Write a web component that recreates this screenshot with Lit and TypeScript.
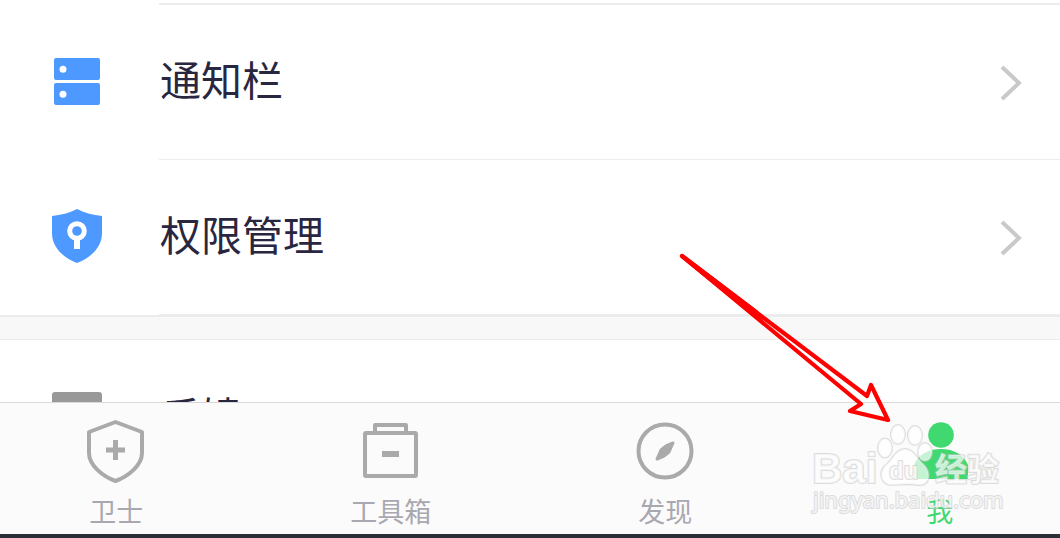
import { LitElement, html, svg, css } from "lit";
import { customElement, property } from "lit/decorators.js";

const icons: Record<string, unknown> = {
  notice: svg`<rect x="2" y="4" width="46" height="22" rx="2" fill="#4d99ff"/><rect x="2" y="29" width="46" height="22" rx="2" fill="#4d99ff"/><circle cx="11" cy="15.300" r="3.500" fill="#fff"/><circle cx="11" cy="40.300" r="3.500" fill="#fff"/>`,
  shield: svg`<path d="M0 7C9 6 17 4 25 0C33 4 41 6 50 7V24C50 39 38 49 25 54C12 49 0 39 0 24Z" fill="#4d99ff"/><circle cx="25" cy="22" r="7.300" fill="none" stroke="#fff" stroke-width="5"/><path d="M25 28V40" stroke="#fff" stroke-width="6"/>`,
  feedback: svg`<rect x="0" y="2" width="50" height="50" rx="3" fill="#999"/>`,
};

@customElement("list-row")
class ListRow extends LitElement {
  @property() label = "";
  @property() icon = "";
  static styles = css`
    :host { display: block; }
    .row { display: flex; width: 100%; height: 155px; box-sizing: border-box; align-items: center; padding: 0 0 0 52px; border: 0; background: #fff; font: inherit; text-align: left; }
    .icon { width: 50px; height: 54px; flex: none; margin: 0 57px 3px 0; }
    .body { flex: 1; display: flex; align-items: center; justify-content: space-between; height: 100%; box-sizing: border-box; padding: 2px 37px 0 1px; border-bottom: 1px solid #ececec; }
    .label { font-size: 41px; line-height: 60px; color: #29263f; padding-bottom: 10px; }
    .chevron { width: 24px; height: 38px; }
  `;
  render() {
    return html`<button class="row" type="button">
      <svg class="icon" viewBox="0 0 50 54" aria-hidden="true">${icons[this.icon]}</svg>
      <span class="body"><span class="label">${this.label}</span>
        <svg class="chevron" viewBox="0 0 24 38" aria-hidden="true"><path d="M3 3L20 19L3 35" fill="none" stroke="#c9c9c9" stroke-width="4"/></svg>
      </span>
    </button>`;
  }
}

const tabs = [
  { label: "卫士", art: svg`<path d="M31.500 3L58 13V34C58 46 45 57 31.500 62C18 57 5 46 5 34V13Z" stroke-width="4" stroke-linejoin="round"/><path d="M31.500 21V41M22 31H41" stroke-width="5"/>` },
  { label: "工具箱", art: svg`<rect x="6" y="14" width="51" height="43" rx="1" stroke-width="4"/><path d="M16 14V6H47V14" stroke-width="4" stroke-linejoin="round"/><path d="M23 35H40" stroke-width="6"/>` },
  { label: "发现", art: svg`<circle cx="32" cy="32" r="26.500" stroke-width="4"/><path d="M40 24L36 33L31 37L24 40L28 31L33 27Z" fill="#aaa" stroke-width="3" stroke-linejoin="round"/>` },
  { label: "我", active: true, art: svg`<g fill="#3fd970" stroke="none"><circle cx="33" cy="16" r="12.800"/><path d="M6 60V46C10 36 20 30 33 30C46 30 56 36 60 46V60Z"/></g>` },
];

@customElement("tab-bar")
class TabBar extends LitElement {
  static styles = css`
    :host { display: block; background: #fbfbfb; border-top: 1px solid #d9d9d9; border-bottom: 4px solid #2b3036; }
    .tabs { display: grid; grid-template-columns: repeat(4, 26%); justify-content: center; padding-right: 4px; }
    .tab { height: 131px; padding: 16px 0 0; border: 0; background: none; font: inherit; font-size: 27px; line-height: 40px; color: #a9a8b0; display: flex; flex-direction: column; align-items: center; }
    .active { color: #3fd970; }
    .glyph { width: 64px; height: 66px; margin-bottom: 6px; fill: none; stroke: #aaa; flex: none; }
  `;
  render() {
    return html`<nav class="tabs">${tabs.map((t) => html`<button type="button" class="tab ${t.active ? "active" : ""}"><svg class="glyph" viewBox="0 0 64 66" aria-hidden="true">${t.art}</svg>${t.label}</button>`)}</nav>`;
  }
}

@customElement("app-root")
class AppRoot extends LitElement {
  static styles = css`
    :host { display: flex; flex-direction: column; height: 100vh; position: relative; overflow: hidden; background: #fff; font-family: "Noto Sans CJK SC", sans-serif; }
    .list { flex: 1; min-height: 0; overflow: hidden; }
    .lead { height: 2px; margin: 3px 0 0 159px; background: #ececec; }
    .gap { height: 22px; margin-bottom: 1px; background: #f8f8f8; border-top: 2px solid #ececec; border-bottom: 1px solid #ececec; }
    .overlay { position: absolute; right: 0; bottom: 0; width: 400px; height: 300px; pointer-events: none; }
    .brand { font: bold 42px "Liberation Sans", sans-serif; }
    .cn { font: bold 32px "Noto Sans CJK SC", sans-serif; }
    .du { font: bold 24px "Liberation Sans", sans-serif; }
    .site { font: 22px "Noto Sans", sans-serif; }
  `;
  render() {
    return html`
      <main class="list">
        <div class="lead"></div>
        <list-row label="通知栏" icon="notice"></list-row>
        <list-row label="权限管理" icon="shield"></list-row>
        <div class="gap"></div>
        <list-row label="反馈" icon="feedback"></list-row>
      </main>
      <tab-bar></tab-bar>
      <svg class="overlay" viewBox="660 238 400 300" aria-hidden="true">
        <g fill="#fff" fill-opacity="0.7" stroke="#c8c8c8" stroke-opacity="0.6" stroke-width="2" stroke-linejoin="round" paint-order="stroke">
          <text class="brand" x="812" y="483">Bai</text>
          <ellipse cx="885" cy="448" rx="7" ry="9.500"/><ellipse cx="898" cy="434.500" rx="7" ry="9.500"/><ellipse cx="915" cy="435.500" rx="7" ry="9.500"/><ellipse cx="925" cy="452" rx="7" ry="9"/>
          <path d="M905 449C896 449 893 459 887 464C877 472 881 485 892 485C899 485 908 483 918 485C931 486 931 472 924 465C917 459 914 449 905 449Z"/>
          <text class="du" x="889" y="479">du</text>
          <text class="cn" x="935" y="481">经验</text>
          <text class="site" x="813" y="508">jingyan.baidu.com</text>
        </g>
        <g stroke="#f00" stroke-width="4.200" stroke-linejoin="round">
          <path d="M682 256L867 396L871 385L888 420L850 411L861 404Z" fill="none"/>
          <path d="M682 256L756 312L750 311Z" fill="#f00"/>
        </g>
      </svg>`;
  }
}
